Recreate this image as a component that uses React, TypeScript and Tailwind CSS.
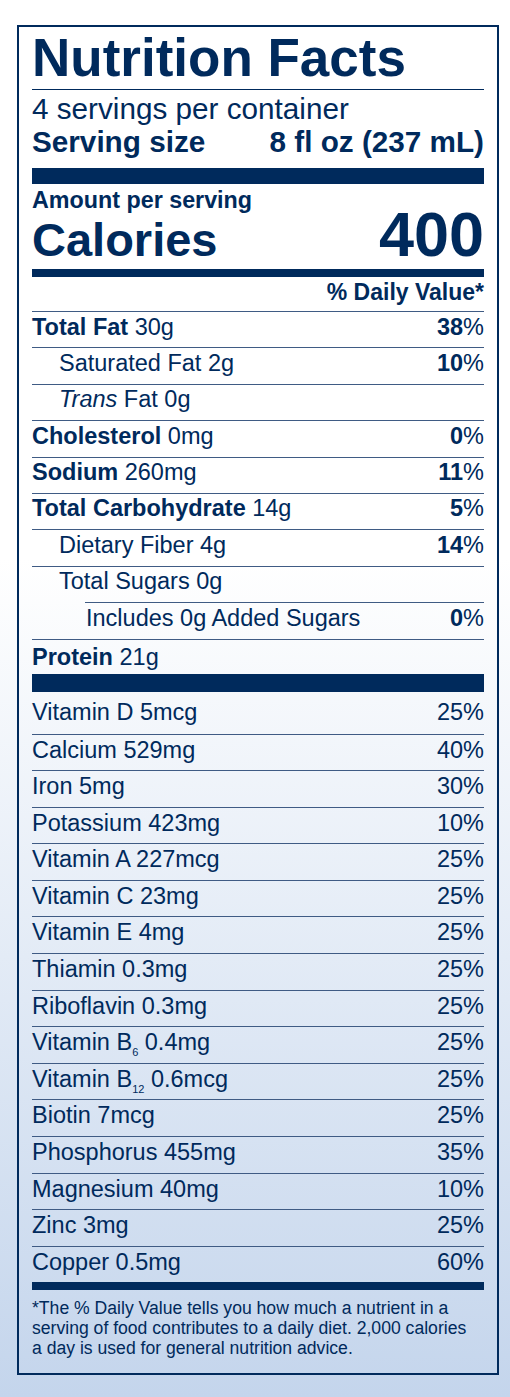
import type { ReactNode } from "react";

interface NutrientRowProps {
    label: ReactNode;
    dv?: string;
    indent?: 0 | 1 | 2;
    bordered?: boolean;
    className?: string;
}

function NutrientRow({ label, dv, indent = 0, bordered = true, className = "h-[36.4px] pt-[1.5px]" }: NutrientRowProps) {
    const indentCls = indent === 1 ? "pl-[27px]" : "";
    return (
        <div
            className={`flex justify-between items-start leading-[26px] text-[23.5px] ${
                bordered ? "border-t border-[#3f5b84]" : ""
            } ${indent === 2 ? "ml-[53px] pl-px" : indentCls} ${className}`}
        >
            <span>{label}</span>
            {dv !== undefined && (
                <span>
                    <span className="font-bold">{dv}</span>%
                </span>
            )}
        </div>
    );
}

interface VitaminRowProps {
    label: ReactNode;
    dv: string;
    first?: boolean;
}

function VitaminRow({ label, dv, first }: VitaminRowProps) {
    return (
        <div
            className={`flex justify-between items-start leading-[26px] text-[23.5px] ${
                first ? "h-[42px] pt-[7px]" : "h-[36.6px] pt-[2px] border-t border-[#3f5b84]"
            }`}
        >
            <span>{label}</span>
            <span>{dv}%</span>
        </div>
    );
}

const vitamins: { label: ReactNode; dv: string }[] = [
    { label: "Vitamin D 5mcg", dv: "25" },
    { label: "Calcium 529mg", dv: "40" },
    { label: "Iron 5mg", dv: "30" },
    { label: "Potassium 423mg", dv: "10" },
    { label: "Vitamin A 227mcg", dv: "25" },
    { label: "Vitamin C 23mg", dv: "25" },
    { label: "Vitamin E 4mg", dv: "25" },
    { label: "Thiamin 0.3mg", dv: "25" },
    { label: "Riboflavin 0.3mg", dv: "25" },
    {
        label: (
            <>
                Vitamin B<sub className="text-[11px] align-[-3px]">6</sub> 0.4mg
            </>
        ),
        dv: "25",
    },
    {
        label: (
            <>
                Vitamin B<sub className="text-[11px] align-[-3px]">12</sub> 0.6mcg
            </>
        ),
        dv: "25",
    },
    { label: "Biotin 7mcg", dv: "25" },
    { label: "Phosphorus 455mg", dv: "35" },
    { label: "Magnesium 40mg", dv: "10" },
    { label: "Zinc 3mg", dv: "25" },
    { label: "Copper 0.5mg", dv: "60" },
];

export default function App() {
    return (
        <div className="min-h-[1397px] pt-[25px] pl-[17px] pb-[22px] bg-[linear-gradient(to_bottom,#ffffff_40%,#c4d5ec_100%)] font-['Liberation_Sans',Arial,sans-serif] text-[#002a5c]">
            <div className="w-[482px] border-2 border-[#002a5c] px-[13px] pt-[4px] pb-[14.5px]">
                {/* Header */}
                <div className="border-b border-[#002a5c] pb-[5px]">
                    <h1 className="text-[53px] font-bold leading-none">Nutrition Facts</h1>
                </div>
                <div className="pt-[1.5px] text-[29.7px] leading-[33px]">
                    <p>4 servings per container</p>
                    <div className="flex justify-between font-bold">
                        <span>Serving size</span>
                        <span>8 fl oz (237 mL)</span>
                    </div>
                </div>
                <div className="mt-[10.5px] h-[16px] bg-[#002a5c]" />

                {/* Calories */}
                <p className="mt-[3px] text-[23.3px] leading-[26px] font-bold">Amount per serving</p>
                <div className="-mt-px flex justify-between items-baseline font-bold">
                    <span className="text-[47px] leading-[44px]">Calories</span>
                    <span className="text-[63px] leading-[44px]">400</span>
                </div>
                <div className="mt-[7px] h-[8px] bg-[#002a5c]" />
                <p className="mt-[2px] mb-[6px] text-right text-[23px] leading-[26px] font-bold">% Daily Value*</p>

                {/* Nutrients */}
                <NutrientRow label={<><b>Total Fat</b> 30g</>} dv="38" />
                <NutrientRow label="Saturated Fat 2g" dv="10" indent={1} />
                <NutrientRow label={<><i>Trans</i> Fat 0g</>} indent={1} />
                <NutrientRow label={<><b>Cholesterol</b> 0mg</>} dv="0" />
                <NutrientRow label={<><b>Sodium</b> 260mg</>} dv="11" />
                <NutrientRow label={<><b>Total Carbohydrate</b> 14g</>} dv="5" />
                <NutrientRow label="Dietary Fiber 4g" dv="14" indent={1} />
                <NutrientRow label="Total Sugars 0g" indent={1} />
                <NutrientRow label="Includes 0g Added Sugars" dv="0" indent={2} />
                <NutrientRow label={<><b>Protein</b> 21g</>} className="h-[35px] pt-[4px]" />
                <div className="h-[18px] bg-[#002a5c]" />

                {/* Vitamins & minerals */}
                {vitamins.map((v, i) => (
                    <VitaminRow key={i} label={v.label} dv={v.dv} first={i === 0} />
                ))}
                <div className="h-[8px] bg-[#002a5c]" />

                <p className="mt-[8px] text-[17.6px] leading-[20px]">
                    *The % Daily Value tells you how much a nutrient in a
                    <br />
                    serving of food contributes to a daily diet. 2,000 calories
                    <br />
                    a day is used for general nutrition advice.
                </p>
            </div>
        </div>
    );
}
